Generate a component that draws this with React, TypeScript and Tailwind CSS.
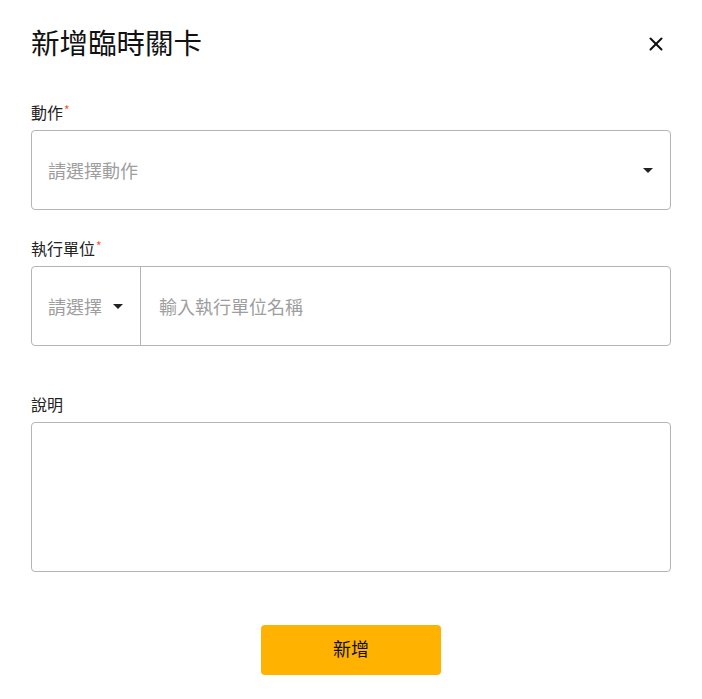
import { X } from "lucide-react";

const font = { fontFamily: '"Noto Sans CJK TC", "Noto Sans", sans-serif' };

function Caret() {
  return (
    <svg width="10" height="5" viewBox="0 0 10 5" className="shrink-0">
      <path d="M0 0h10L5 5z" fill="#222" />
    </svg>
  );
}

function Label({ text, required }: { text: string; required?: boolean }) {
  return (
    <div className="flex h-6 items-center text-[16px] leading-6 text-[#222]">
      {text}
      {required && <span className="ml-px self-start text-[12px] leading-5 text-[#f5582c]">*</span>}
    </div>
  );
}

export default function App() {
  return (
    <div className="min-h-[699px] w-[702px] bg-white px-[31px] pt-6" style={font}>
      <div className="flex h-9 items-center justify-between">
        <h1 className="text-[28.5px] leading-9 font-normal text-[#111]">新增臨時關卡</h1>
        <button type="button" className="mr-[4px] translate-y-[2px] text-[#111]">
          <X className="h-[22px] w-[22px]" strokeWidth={2.2} />
        </button>
      </div>

      <div className="mt-10">
        <Label text="動作" required />
        <div className="mt-1.5 flex h-20 items-center justify-between rounded-[4px] border border-[#b5b5b5] pr-[17px] pl-4">
          <span className="text-[18px] text-[#9e9e9e]">請選擇動作</span>
          <Caret />
        </div>
      </div>

      <div className="mt-[26px]">
        <Label text="執行單位" required />
        <div className="mt-1.5 flex h-20 rounded-[4px] border border-[#b5b5b5]">
          <div className="flex w-[109px] shrink-0 items-center gap-[11px] border-r border-[#b5b5b5] pl-4">
            <span className="text-[18px] text-[#9e9e9e]">請選擇</span>
            <Caret />
          </div>
          <div className="flex flex-1 items-center pl-[18px] text-[18px] text-[#9e9e9e]">輸入執行單位名稱</div>
        </div>
      </div>

      <div className="mt-[46px]">
        <Label text="說明" />
        <div className="mt-1.5 h-[150px] rounded-[4px] border border-[#b5b5b5]" />
      </div>

      <div className="mt-[53px] flex justify-center">
        <button
          type="button"
          className="h-[50px] w-[180px] rounded-[4px] bg-[#ffb300] pb-[3px] text-[18px] text-[#111]"
        >
          新增
        </button>
      </div>
    </div>
  );
}
